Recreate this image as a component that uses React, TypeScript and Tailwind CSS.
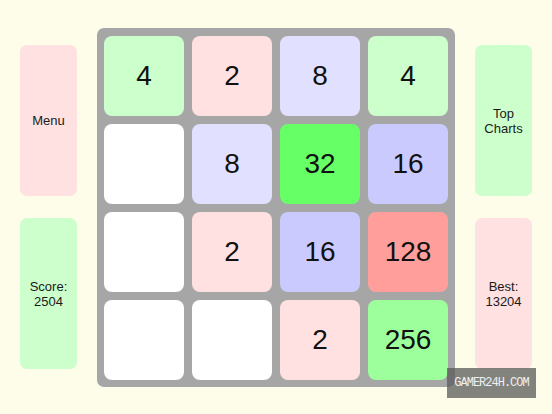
const TILE_COLORS: Record<number, string> = {
  0: "bg-white",
  2: "bg-[#ffe1e1]",
  4: "bg-[#ccffcc]",
  8: "bg-[#e1e1ff]",
  16: "bg-[#cacaff]",
  32: "bg-[#66ff66]",
  128: "bg-[#ff9e9a]",
  256: "bg-[#9cff9c]",
};

const BOARD = [
  [4, 2, 8, 4],
  [0, 8, 32, 16],
  [0, 2, 16, 128],
  [0, 0, 2, 256],
];

function SidePanel({ color, children }: { color: string; children: React.ReactNode }) {
  return (
    <div
      className={`flex h-[151px] w-[57px] items-center justify-center rounded-[7px] text-center text-[13px] leading-[15px] text-[#1a1a1a] ${color}`}
    >
      <div>{children}</div>
    </div>
  );
}

export default function App() {
  return (
    <div
      className="relative flex h-[414px] w-[552px] items-center gap-5 bg-[#fefde9] px-5"
      style={{ fontFamily: '"Liberation Sans", Arial, sans-serif' }}
    >
      {/* Left column */}
      <div className="flex flex-col gap-[22px]">
        <SidePanel color="bg-[#ffe1e1]">Menu</SidePanel>
        <SidePanel color="bg-[#ccffcc]">
          Score:
          <br />
          2504
        </SidePanel>
      </div>

      {/* Board */}
      <div className="grid h-[359px] w-[358px] grid-cols-4 gap-2 rounded-[7px] bg-[#a6a6a6] p-[7px] pt-[8px]">
        {BOARD.flat().map((v, i) => (
          <div
            key={i}
            className={`flex h-[80px] w-[80px] items-center justify-center rounded-[8px] text-[28px] text-[#111] ${TILE_COLORS[v]}`}
          >
            {v > 0 ? v : ""}
          </div>
        ))}
      </div>

      {/* Right column */}
      <div className="flex flex-col gap-[22px]">
        <SidePanel color="bg-[#ccffcc]">
          Top
          <br />
          Charts
        </SidePanel>
        <SidePanel color="bg-[#ffe1e1]">
          Best:
          <br />
          13204
        </SidePanel>
      </div>

      {/* Watermark */}
      <div
        className="absolute left-[447px] top-[368px] flex h-[30px] w-[89px] items-center justify-center bg-[#5a5a5a]/75 text-[12px] tracking-[-1px] text-[#f0f0f0]"
        style={{ fontFamily: '"Liberation Mono", "DejaVu Sans Mono", monospace' }}
      >
        GAMER24H.COM
      </div>
    </div>
  );
}
